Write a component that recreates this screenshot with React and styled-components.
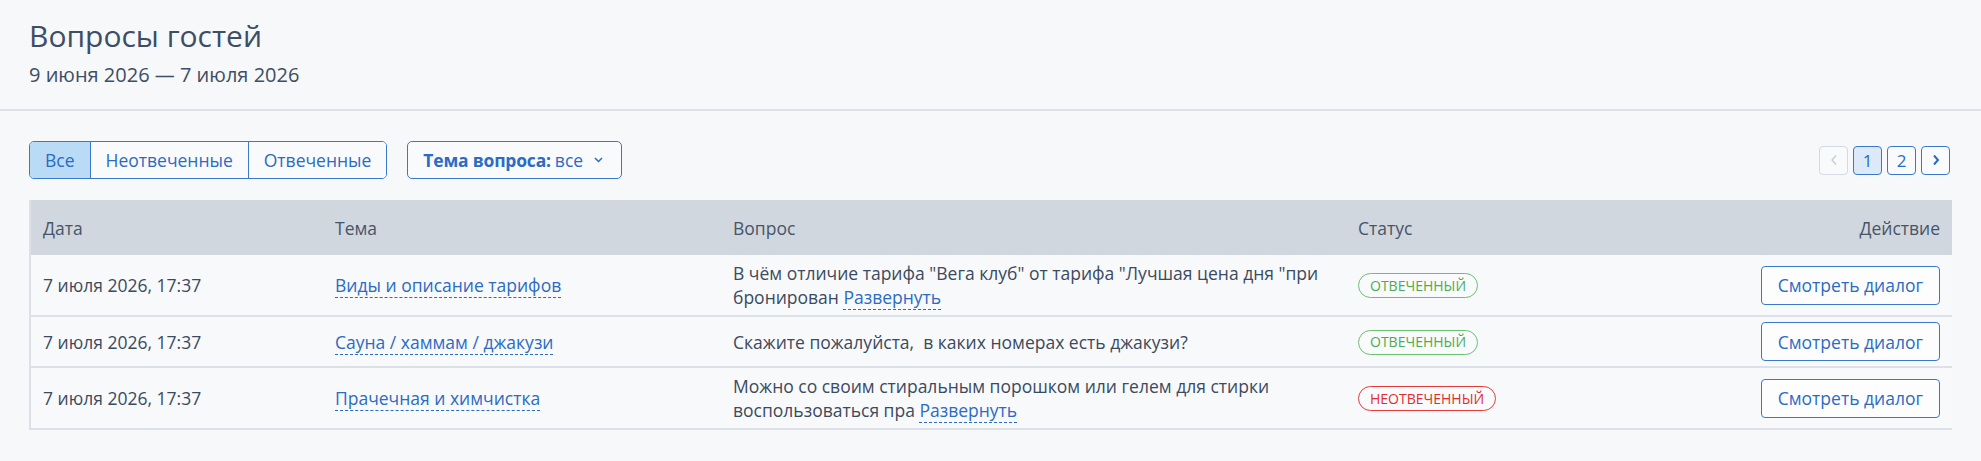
import React from "react";
import styled, { createGlobalStyle } from "styled-components";

const Global = createGlobalStyle`
  html, body { margin: 0; padding: 0; background: #f7f8fa; }
  body { font-family: "Open Sans", "Noto Sans", sans-serif; color: #3b4a5e; }
  * { box-sizing: border-box; }
`;

const Page = styled.div`
  min-height: 461px;
  background: #f7f8fa;
`;

const Header = styled.header`
  padding: 16px 29px 21px;
  border-bottom: 2px solid #dde2e8;
  display: flex;
  flex-direction: column;
  gap: 6px;
`;

const Title = styled.h1`
  margin: 0;
  font-size: 30px;
  line-height: 40px;
  font-weight: 400;
  color: #3d4e65;
`;

const Subtitle = styled.div`
  font-size: 20px;
  line-height: 26px;
  color: #3d4e65;
`;

const Content = styled.main`
  padding: 30px 29px 0 29px;
  display: flex;
  flex-direction: column;
  gap: 21px;
`;

const Toolbar = styled.div`
  display: flex;
  align-items: center;
  gap: 20px;
`;

const Segmented = styled.div`
  display: flex;
  border: 1.5px solid #3a78cf;
  border-radius: 5px;
  overflow: hidden;
  height: 38px;
`;

const Segment = styled.button`
  font-family: inherit;
  font-size: 17.5px;
  height: 100%;
  padding: 0 15px;
  border: none;
  border-left: ${(p) => (p.$first ? "none" : "1.5px solid #3a78cf")};
  background: ${(p) => (p.$active ? "#b9dbf6" : "#f9fafc")};
  color: #2b6bc4;
  cursor: pointer;
`;

const Dropdown = styled.button`
  font-family: inherit;
  font-size: 17.5px;
  height: 38px;
  padding: 0 18px 0 15px;
  border: 1.5px solid #3a78cf;
  border-radius: 5px;
  background: #f9fafc;
  color: #2b6bc4;
  display: flex;
  align-items: center;
  gap: 4px;
  cursor: pointer;
  b { font-weight: 700; letter-spacing: -0.2px; }
`;

const Chevron = styled.svg`
  margin-left: 7px;
  width: 9px;
  height: 6px;
`;

const Pager = styled.div`
  margin-left: auto;
  display: flex;
  gap: 5px;
  padding-right: 2px;
`;

const PageBtn = styled.button`
  width: 29px;
  height: 29px;
  padding: 0;
  font-family: inherit;
  font-size: 17px;
  border-radius: 4px;
  border: 1.5px solid ${(p) => (p.$disabled ? "#d3dae3" : "#3a78cf")};
  background: ${(p) => (p.$active ? "#dbe9f8" : "#f9fafc")};
  color: ${(p) => (p.$disabled ? "#c2cad4" : "#2b6bc4")};
  display: flex;
  align-items: center;
  justify-content: center;
`;

const Table = styled.table`
  width: 100%;
  border-collapse: collapse;
  table-layout: fixed;
  border-left: 2px solid #dde1e7;
  border-bottom: 2px solid #dde1e7;
  font-size: 17.5px;
`;

const Th = styled.th`
  background: #d1d7df;
  height: 55px;
  padding: 0 12px;
  font-weight: 400;
  text-align: ${(p) => (p.$right ? "right" : "left")};
  color: #46556a;
`;

const Tr = styled.tr`
  border-top: 2px solid #dde1e7;
  &:first-child { border-top: none; }
`;

const Td = styled.td`
  padding: 5px ${(p) => (p.$tight ? "2px" : "12px")} 5px 12px;
  line-height: 24px;
  vertical-align: middle;
  text-align: ${(p) => (p.$right ? "right" : "left")};
  color: #3b4a5e;
  background: #f8f9fb;
`;

const Link = styled.a`
  color: #2b6bc4;
  text-decoration: none;
  border-bottom: 1px dashed #2b6bc4;
  cursor: pointer;
`;

const Question = styled.div`
  padding: 1px 0;
`;

const Badge = styled.span`
  display: inline-flex;
  align-items: center;
  height: 25px;
  padding: 0 11px;
  border-radius: 13px;
  border: 1.5px solid ${(p) => (p.$ok ? "#6cc070" : "#e8393a")};
  color: ${(p) => (p.$ok ? "#4eab52" : "#e12d2d")};
  font-size: 14px;
  text-transform: uppercase;
  background: #f9fafc;
`;

const ActionBtn = styled.button`
  font-family: inherit;
  font-size: 17.5px;
  height: 39px;
  padding: 0 16px;
  border: 1.5px solid #3a78cf;
  border-radius: 4px;
  background: #fdfdfe;
  color: #2b6bc4;
  cursor: pointer;
`;

const rows = [
  {
    date: "7 июля 2026, 17:37",
    topic: "Виды и описание тарифов",
    q: 'В чём отличие тарифа "Вега клуб" от тарифа "Лучшая цена дня "при бронирован',
    more: true,
    ok: true,
  },
  {
    date: "7 июля 2026, 17:37",
    topic: "Сауна / хаммам / джакузи",
    q: "Скажите пожалуйста,\u00a0 в каких номерах есть джакузи?",
    more: false,
    ok: true,
  },
  {
    date: "7 июля 2026, 17:37",
    topic: "Прачечная и химчистка",
    q: "Можно со своим стиральным порошком или гелем для стирки воспользоваться пра",
    more: true,
    ok: false,
  },
];

export default function App() {
  return (
    <Page>
      <Global />
      <Header>
        <Title>Вопросы гостей</Title>
        <Subtitle>9 июня 2026 — 7 июля 2026</Subtitle>
      </Header>
      <Content>
        <Toolbar>
          <Segmented>
            <Segment $first $active>Все</Segment>
            <Segment>Неотвеченные</Segment>
            <Segment>Отвеченные</Segment>
          </Segmented>
          <Dropdown>
            <b>Тема вопроса:</b> все
            <Chevron viewBox="0 0 9 6">
              <path d="M1 1l3.5 3.5L8 1" fill="none" stroke="#2b6bc4" strokeWidth="1.5" />
            </Chevron>
          </Dropdown>
          <Pager>
            <PageBtn $disabled>
              <svg width="8" height="12" viewBox="0 0 8 12">
                <path d="M6 1.5L2 6l4 4.5" fill="none" stroke="#c6cdd6" strokeWidth="1.4" />
              </svg>
            </PageBtn>
            <PageBtn $active>1</PageBtn>
            <PageBtn>2</PageBtn>
            <PageBtn>
              <svg width="8" height="12" viewBox="0 0 8 12">
                <path d="M2 1.5L6 6l-4 4.5" fill="none" stroke="#2b6bc4" strokeWidth="2" />
              </svg>
            </PageBtn>
          </Pager>
        </Toolbar>
        <Table>
          <colgroup>
            <col style={{ width: 293 }} />
            <col style={{ width: 398 }} />
            <col style={{ width: 625 }} />
            <col style={{ width: 300 }} />
            <col />
          </colgroup>
          <thead>
            <tr>
              <Th>Дата</Th>
              <Th>Тема</Th>
              <Th>Вопрос</Th>
              <Th>Статус</Th>
              <Th $right>Действие</Th>
            </tr>
          </thead>
          <tbody>
            {rows.map((r, i) => (
              <Tr key={i}>
                <Td>{r.date}</Td>
                <Td>
                  <Link>{r.topic}</Link>
                </Td>
                <Td $tight>
                  <Question>
                    {r.q}
                    {r.more && (
                      <>
                        {" "}
                        <Link>Развернуть</Link>
                      </>
                    )}
                  </Question>
                </Td>
                <Td>
                  <Badge $ok={r.ok}>{r.ok ? "Отвеченный" : "Неотвеченный"}</Badge>
                </Td>
                <Td $right>
                  <ActionBtn>Смотреть диалог</ActionBtn>
                </Td>
              </Tr>
            ))}
          </tbody>
        </Table>
      </Content>
    </Page>
  );
}
